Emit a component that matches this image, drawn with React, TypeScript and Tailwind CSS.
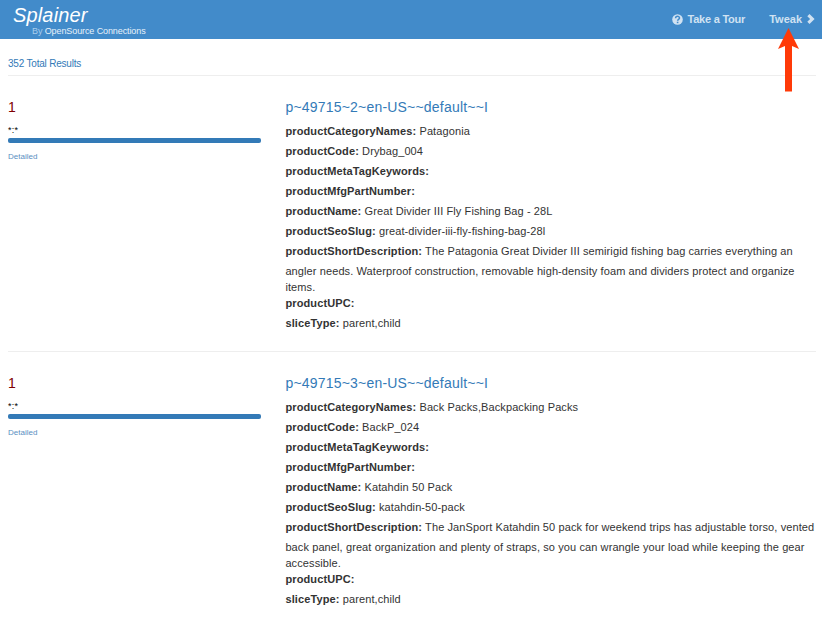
import { memo } from 'react';

interface Field {
  name: string;
  value: string;
}

interface SearchDoc {
  id: string;
  title: string;
  score: number;
  maxScore: number;
  fields: Field[];
}

const docs: SearchDoc[] = [
  {
    id: '2',
    title: 'p~49715~2~en-US~~default~~I',
    score: 1,
    maxScore: 1,
    fields: [
      { name: 'productCategoryNames', value: 'Patagonia' },
      { name: 'productCode', value: 'Drybag_004' },
      { name: 'productMetaTagKeywords', value: '' },
      { name: 'productMfgPartNumber', value: '' },
      { name: 'productName', value: 'Great Divider III Fly Fishing Bag - 28L' },
      { name: 'productSeoSlug', value: 'great-divider-iii-fly-fishing-bag-28l' },
      {
        name: 'productShortDescription',
        value:
          'The Patagonia Great Divider III semirigid fishing bag carries everything an angler needs. Waterproof construction, removable high-density foam and dividers protect and organize items.',
      },
      { name: 'productUPC', value: '' },
      { name: 'sliceType', value: 'parent,child' },
    ],
  },
  {
    id: '3',
    title: 'p~49715~3~en-US~~default~~I',
    score: 1,
    maxScore: 1,
    fields: [
      { name: 'productCategoryNames', value: 'Back Packs,Backpacking Packs' },
      { name: 'productCode', value: 'BackP_024' },
      { name: 'productMetaTagKeywords', value: '' },
      { name: 'productMfgPartNumber', value: '' },
      { name: 'productName', value: 'Katahdin 50 Pack' },
      { name: 'productSeoSlug', value: 'katahdin-50-pack' },
      {
        name: 'productShortDescription',
        value:
          'The JanSport Katahdin 50 pack for weekend trips has adjustable torso, vented back panel, great organization and plenty of straps, so you can wrangle your load while keeping the gear accessible.',
      },
      { name: 'productUPC', value: '' },
      { name: 'sliceType', value: 'parent,child' },
    ],
  },
];

const Header = () => (
  <header className="flex h-[39px] justify-between bg-[#428bca] pl-3 pr-[7px] text-[#d0e2f2]">
    <div className="pt-[3px]">
      <h1 className="pl-px text-[20px] italic leading-6 tracking-[0.15px] text-white">Splainer</h1>
      <p className="-mt-0.5 pl-5 text-[9px] leading-3 tracking-[-0.1px] text-[#a9cdec]">
        By <a className="text-[#e6f1fa]">OpenSource Connections</a>
      </p>
    </div>
    <nav className="flex h-[38px] items-center gap-6 text-[11px] font-bold">
      <a className="flex items-center gap-1 tracking-[-0.22px]">
        <svg viewBox="0 0 11 11" className="h-[11px] w-[11px]">
          <circle cx="5.5" cy="5.5" r="5.3" fill="currentColor" />
          <path d="M3.6 4.2C3.6 1.7 7.5 1.8 7.5 4.1C7.5 5.4 5.6 5.4 5.6 6.8" fill="none" stroke="#428bca" strokeWidth="1.5" />
          <path d="M4.8 7.7h1.6v1.5H4.8z" fill="#428bca" />
        </svg>
        Take a Tour
      </a>
      <a className="flex items-center gap-[5px]">
        Tweak
        <svg viewBox="0 0 8 10" className="h-2.5 w-2">
          <path d="M0.3 2.2L2.5 0L7.6 5L2.5 10L0.3 7.8L3.1 5z" fill="currentColor" />
        </svg>
      </a>
    </nav>
  </header>
);

// Score column: total, matched query and its bar
const Score = ({ score, maxScore }: { score: number; maxScore: number }) => (
  <div className="w-[253px] shrink-0">
    <div className="text-[14px] leading-5 text-[#800000]">{score}</div>
    <div className="mt-[7px] text-[9px] leading-3 tracking-[0.3px] text-black">*:*</div>
    <div className="mt-[2px] h-[5px] rounded-[2px] bg-[#eeeeee]">
      <div className="h-full rounded-[2px] bg-[#337ab7]" style={{ width: `${(score / maxScore) * 100}%` }} />
    </div>
    <a className="mt-2 block text-[8px] leading-3 text-[#5a8fc2]">Detailed</a>
  </div>
);

const Doc = memo(({ doc }: { doc: SearchDoc }) => (
  <li className="flex h-[276px] gap-6 border-t border-[#eeeeee] pt-[21px]">
    <Score score={doc.score} maxScore={doc.maxScore} />
    <div className="min-w-0 flex-1 pl-[0.4px] text-[11px] leading-4 tracking-[0.1px]">
      <h2 className="mb-[6px] text-[14px] leading-5 tracking-[0.2px] text-[#337ab7]">{doc.title}</h2>
      {doc.fields.map((field) => (
        <div key={field.name}>
          <strong className="mb-1 inline-block tracking-[0.12px]">{field.name}:</strong> {field.value}
        </div>
      ))}
    </div>
  </li>
));

Doc.displayName = 'Doc';

const Arrow = () => (
  <svg viewBox="0 0 22 64" className="absolute left-[778px] top-[28px] h-16 w-[22px]">
    <path d="M10.5 0L21 21L14 18V63.5H7V18L0 21z" fill="#ff3a08" />
  </svg>
);

export default function App() {
  return (
    <div className="relative h-[617px] overflow-hidden bg-white font-['Liberation_Sans',Arial,sans-serif] text-[#333333]">
      <Header />
      <main className="pl-2 pr-[6px]">
        <p className="pb-[3px] pt-[16px] text-[10px] leading-[17px] tracking-[-0.2px] text-[#337ab7]">352 Total Results</p>
        <ul>
          {docs.map((doc) => (
            <Doc key={doc.id} doc={doc} />
          ))}
        </ul>
      </main>
      <Arrow />
    </div>
  );
}
